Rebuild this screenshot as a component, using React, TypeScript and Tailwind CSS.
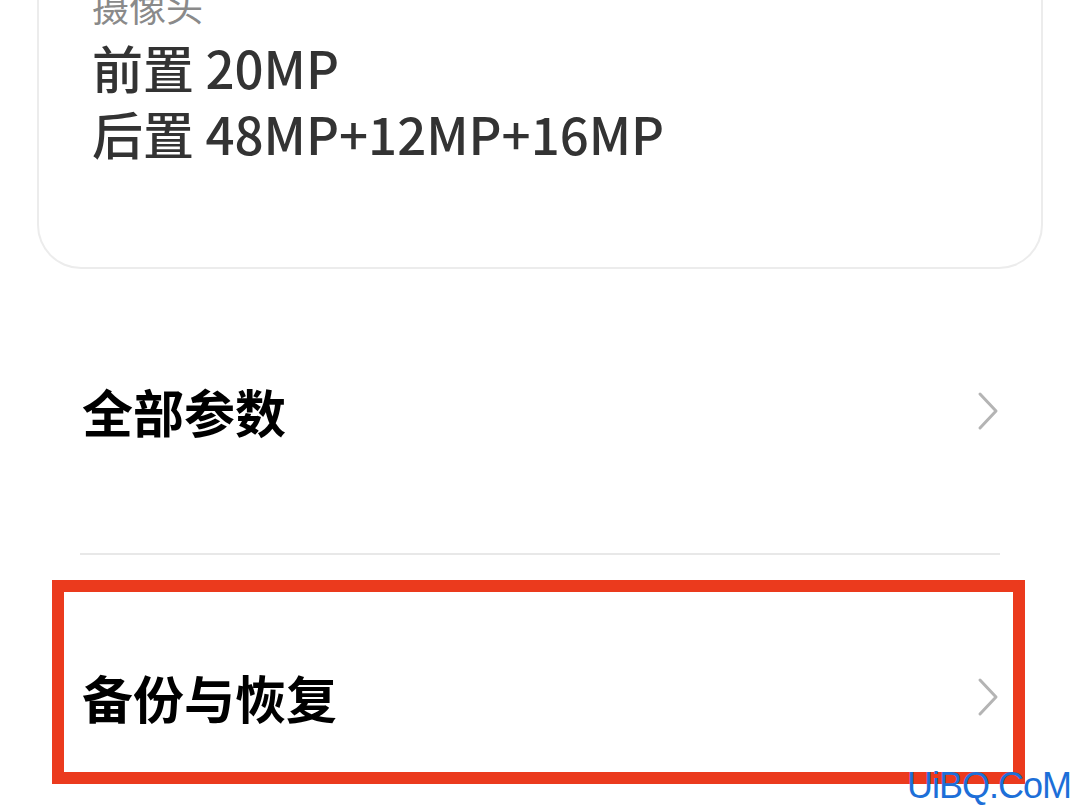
const CJK = "font-['Noto_Sans_CJK_SC',sans-serif]";

const Chevron = () => (
  <svg width="24" height="40" viewBox="0 0 24 40" fill="none" className="shrink-0">
    <path d="M4 3 L20 20 L4 37" stroke="#b4b4b4" strokeWidth="3" strokeLinecap="round" strokeLinejoin="round" />
  </svg>
);

const SpecCard = () => (
  <div className="mx-[37px] -mt-[40px] h-[309px] rounded-b-[44px] border-x-2 border-b-2 border-[#ececec] pl-[53px] pt-[24px]">
    <div className="text-[37px] leading-[44px] text-[#8a8a8a]">摄像头</div>
    <div className="mt-[6px] flex flex-col text-[51px] leading-[66px] font-medium text-[#333333]">
      <span>前置 20MP</span>
      <span>后置 48MP+12MP+16MP</span>
    </div>
  </div>
);

const Row = ({ label }: { label: string }) => (
  <div className="flex h-[284px] items-center justify-between pl-[82px] pr-[80px]">
    <span className="text-[51px] font-bold leading-none text-black">{label}</span>
    <Chevron />
  </div>
);

export default function App() {
  return (
    <div className={`relative h-[810px] w-[1080px] overflow-hidden bg-white ${CJK}`}>
      <SpecCard />
      <Row label="全部参数" />
      <div className="mx-[80px] h-[2px] bg-[#e8e8e8]" />
      <Row label="备份与恢复" />

      {/* highlight box drawn over the row */}
      <div className="absolute left-[52px] top-[580px] h-[204px] w-[973px] border-[12px] border-[#eb3a1d]" />

      {/* watermark */}
      <div className="absolute left-[907px] top-[764px] font-['Liberation_Sans',sans-serif] text-[36px] leading-[44px] tracking-[-1px] text-[#1d6fd8]">
        UiBQ.CoM
      </div>
    </div>
  );
}
